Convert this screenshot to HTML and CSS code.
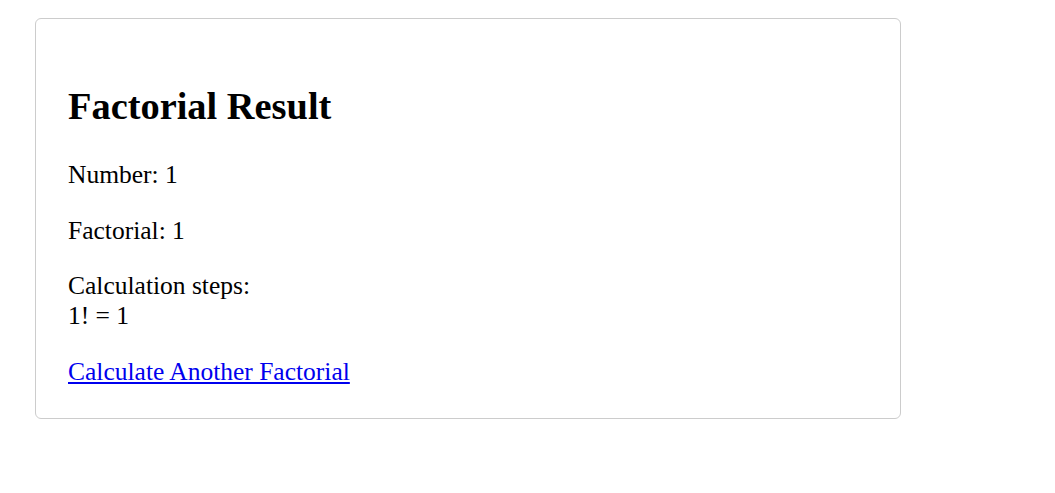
FILE: index.html
```html
<!DOCTYPE html>
<html lang="en">
<head>
<meta charset="utf-8">
<title>Factorial Result</title>
<link rel="stylesheet" href="styles.css">
</head>
<body>
<div class="card">
  <h1 class="title">Factorial Result</h1>
  <p class="line">Number: 1</p>
  <p class="line">Factorial: 1</p>
  <p class="line">Calculation steps:<br>1! = 1</p>
  <a class="back" href="#">Calculate Another Factorial</a>
</div>
</body>
</html>
```

FILE: styles.css
```css
html, body {
  margin: 0;
  padding: 0;
  background: #ffffff;
}
body {
  font-family: "Liberation Serif", "Times New Roman", serif;
  color: #000;
  padding: 18px 35px;
}
.card {
  max-width: 800px;
  padding: 32px 32px 31px;
  border: 1px solid #cccccc;
  border-radius: 6px;
}
.title {
  font-size: 38.4px;
  font-weight: bold;
  margin: 33px 0 32px;
  line-height: 1.15;
}
.line {
  font-size: 25.5px;
  line-height: 30px;
  margin: 25.5px 0;
}
.back {
  display: inline-block;
  font-size: 25.5px;
  line-height: 30px;
  color: #0000ee;
  text-decoration: underline;
}
```
